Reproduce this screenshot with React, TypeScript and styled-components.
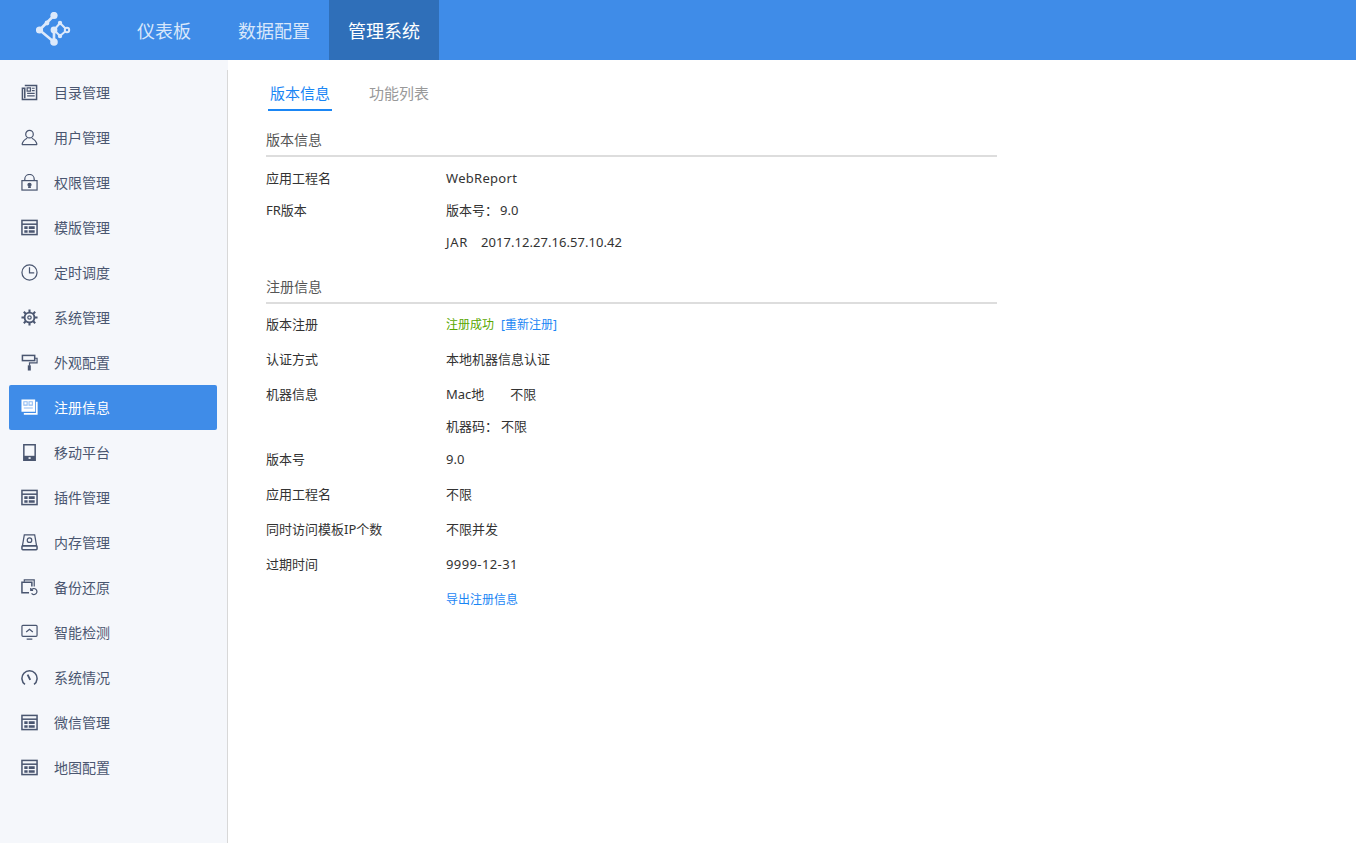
import React from "react";
import styled, { createGlobalStyle } from "styled-components";

const GlobalStyle = createGlobalStyle`
  html, body {
    margin: 0;
    padding: 0;
    height: 100%;
    background: #fff;
  }
  #root {
    height: 100%;
  }
  * {
    box-sizing: border-box;
  }
`;

const FONT = `"Noto Sans", "Noto Sans CJK SC", sans-serif`;

const IconSvg = styled.svg`
  width: 17px;
  height: 17px;
  flex: none;
  fill: none;
  stroke: currentColor;
  stroke-width: 1.3;
`;

const CatalogIcon = () => (
  <IconSvg viewBox="0 0 18 18">
    <path d="M4 1.5h12.5v15H1.5V4.5H4V15" strokeWidth="1.6" />
    <path d="M6.5 4h3.5v3.5H6.5zM11.5 4.5h3M11.5 7h3M6.5 10h8M6.5 12.5h8" />
  </IconSvg>
);

const UserIcon = () => (
  <IconSvg viewBox="0 0 18 18">
    <circle cx="9" cy="5.5" r="4" />
    <path d="M1 16.5C2 12.5 5 10.5 6.5 9.8M17 16.5C16 12.5 13 10.5 11.5 9.8M1 16.5h16" />
  </IconSvg>
);

const LockIcon = () => (
  <IconSvg viewBox="0 0 18 18">
    <rect x="1" y="7" width="16" height="10" />
    <path d="M4 7V5.5a5 5 0 0 1 10 0V7" />
    <circle cx="9" cy="11.5" r="1.6" fill="currentColor" />
    <path d="M7.5 14h3" strokeWidth="1.6" />
  </IconSvg>
);

const TableIcon = () => (
  <IconSvg viewBox="0 0 18 18">
    <rect x="1" y="1.5" width="16" height="15" strokeWidth="1.6" />
    <path d="M1 5.5h16" strokeWidth="1.6" />
    <path d="M3.5 7.8h3.5v2.7H3.5zM3.5 11.8h3.5v2.7H3.5zM8.2 7.8h6.3v2.7H8.2zM8.2 11.8h6.3v2.7H8.2z" fill="currentColor" stroke="none" />
  </IconSvg>
);

const ClockIcon = () => (
  <IconSvg viewBox="0 0 18 18">
    <circle cx="9" cy="9" r="8" />
    <path d="M9 3.5v6h5" />
  </IconSvg>
);

const GearIcon = () => (
  <IconSvg viewBox="0 0 18 18">
    <circle cx="9" cy="9" r="1.8" />
    <circle cx="9" cy="9" r="5.2" strokeWidth="2" />
    <path d="M9 0.5v3M9 14.5v3M0.5 9h3M14.5 9h3M3 3l2.2 2.2M12.8 12.8L15 15M15 3l-2.2 2.2M5.2 12.8L3 15" strokeWidth="2.2" />
  </IconSvg>
);

const RollerIcon = () => (
  <IconSvg viewBox="0 0 18 18">
    <rect x="1.5" y="1.5" width="13" height="5.5" strokeWidth="1.6" />
    <path d="M14.5 4.5h2.5v5H9v3" />
    <rect x="7.2" y="12" width="3.2" height="5.5" fill="currentColor" stroke="none" />
  </IconSvg>
);

const NoteIcon = () => (
  <IconSvg viewBox="0 0 18 18">
    <rect x="0.5" y="0.5" width="14.5" height="13" fill="currentColor" stroke="none" />
    <path d="M3 3h3.5v3.5H3zM8.5 3h3.5v3.5H8.5zM3 9.5h9.5" stroke="#8fbcf3" strokeWidth="1.1" />
    <path d="M16.7 3v12.7H3" strokeWidth="1.8" />
  </IconSvg>
);

const TabletIcon = () => (
  <IconSvg viewBox="0 0 18 18">
    <rect x="3" y="0.8" width="12" height="16.4" strokeWidth="1.6" />
    <path d="M3 12.5h12v4.7H3z" fill="currentColor" stroke="none" />
    <rect x="8" y="14" width="2.2" height="1.8" fill="#f5f7fb" stroke="none" />
  </IconSvg>
);

const DiskIcon = () => (
  <IconSvg viewBox="0 0 18 18">
    <path d="M3.5 1h11l2 11.5h-15z" />
    <rect x="1" y="12.5" width="16" height="4.2" rx="1" strokeWidth="1.6" />
    <circle cx="9" cy="6.5" r="2.4" />
  </IconSvg>
);

const BackupIcon = () => (
  <IconSvg viewBox="0 0 18 18">
    <path d="M3.5 3V1h10.5v7" />
    <path d="M8.5 14.5H1V3.5h10.5v4.5" strokeWidth="1.6" />
    <path d="M11 11.5a3.2 3.2 0 1 1 .2 3.8M10.3 9.5V12h2.5" />
  </IconSvg>
);

const MonitorIcon = () => (
  <IconSvg viewBox="0 0 18 18">
    <rect x="1" y="1.5" width="16" height="11.5" rx="1" />
    <path d="M5.5 8.5L9 5.5l3.5 3M6 16h6" />
  </IconSvg>
);

const GaugeIcon = () => (
  <IconSvg viewBox="0 0 18 18">
    <path d="M4.2 16.3a8 8 0 1 1 9.6 0" strokeWidth="1.6" />
    <path d="M7 6l2.8 5.5" strokeWidth="2" />
  </IconSvg>
);

const LogoMark = () => (
  <svg width="36" height="36" viewBox="0 0 36 36" fill="none" stroke="#dce9fb" strokeWidth="2.6">
    <path d="M18 3.5L3.5 18 18 30V18" />
    <path d="M18 18l6 6 7-6-7-7-6 7" strokeWidth="2" />
    <g fill="#dce9fb" stroke="none">
      <circle cx="18" cy="3.5" r="3.6" />
      <circle cx="3.5" cy="18" r="3.6" />
      <circle cx="18" cy="30" r="3.8" />
      <circle cx="18" cy="18" r="3.4" />
      <circle cx="11" cy="11" r="2.4" />
      <circle cx="24" cy="11" r="2.2" />
      <circle cx="24" cy="24" r="2.2" />
    </g>
    <circle cx="31" cy="18" r="2.2" fill="#3f8ce8" strokeWidth="2" />
  </svg>
);

const menu = [
  { label: "目录管理", icon: <CatalogIcon /> },
  { label: "用户管理", icon: <UserIcon /> },
  { label: "权限管理", icon: <LockIcon /> },
  { label: "模版管理", icon: <TableIcon /> },
  { label: "定时调度", icon: <ClockIcon /> },
  { label: "系统管理", icon: <GearIcon /> },
  { label: "外观配置", icon: <RollerIcon /> },
  { label: "注册信息", icon: <NoteIcon />, active: true },
  { label: "移动平台", icon: <TabletIcon /> },
  { label: "插件管理", icon: <TableIcon /> },
  { label: "内存管理", icon: <DiskIcon /> },
  { label: "备份还原", icon: <BackupIcon /> },
  { label: "智能检测", icon: <MonitorIcon /> },
  { label: "系统情况", icon: <GaugeIcon /> },
  { label: "微信管理", icon: <TableIcon /> },
  { label: "地图配置", icon: <TableIcon /> },
];

const App = () => {
  return (
    <Page>
      <GlobalStyle />
      <TopBar>
        <LogoBox>
          <LogoMark />
        </LogoBox>
        <TopNav>
          <TopItem>仪表板</TopItem>
          <TopItem>数据配置</TopItem>
          <TopItem $active>管理系统</TopItem>
        </TopNav>
      </TopBar>
      <Body>
        <Sidebar>
          <Menu>
            {menu.map((item) => (
              <MenuItem key={item.label} $active={item.active}>
                {item.icon}
                <span>{item.label}</span>
              </MenuItem>
            ))}
          </Menu>
        </Sidebar>
        <Content>
          <Tabs>
            <Tab $active>版本信息</Tab>
            <Tab>功能列表</Tab>
          </Tabs>
          <Section>
            <SectionTitle>版本信息</SectionTitle>
            <Row $gap={0}>
              <Label>应用工程名</Label>
              <Values>
                <Line>
                  <Latin $track={0.3}>WebReport</Latin>
                </Line>
              </Values>
            </Row>
            <Row $gap={0}>
              <Label>FR版本</Label>
              <Values>
                <Line>
                  版本号：<Spacer $width={2} />9.0
                </Line>
                <Line>
                  <Latin $track={0.7}>JAR</Latin>
                  <Spacer $width={13} />
                  <Latin $track={0.05}>2017.12.27.16.57.10.42</Latin>
                </Line>
              </Values>
            </Row>
          </Section>
          <Section>
            <SectionTitle $after={4}>注册信息</SectionTitle>
            <Row>
              <Label>版本注册</Label>
              <Values>
                <Line $small>
                  <Success>注册成功</Success>
                  <Spacer $width={7} />
                  <Link>[重新注册]</Link>
                </Line>
              </Values>
            </Row>
            <Row>
              <Label>认证方式</Label>
              <Values>
                <Line>本地机器信息认证</Line>
              </Values>
            </Row>
            <Row $gap={1}>
              <Label>机器信息</Label>
              <Values>
                <Line>
                  Mac地<Spacer $width={26} />不限
                </Line>
                <Line>
                  机器码：<Spacer $width={3} />不限
                </Line>
              </Values>
            </Row>
            <Row>
              <Label>版本号</Label>
              <Values>
                <Line>9.0</Line>
              </Values>
            </Row>
            <Row>
              <Label>应用工程名</Label>
              <Values>
                <Line>不限</Line>
              </Values>
            </Row>
            <Row>
              <Label>同时访问模板IP个数</Label>
              <Values>
                <Line>不限并发</Line>
              </Values>
            </Row>
            <Row>
              <Label>过期时间</Label>
              <Values>
                <Line>
                  <Latin $track={0.4}>9999-12-31</Latin>
                </Line>
              </Values>
            </Row>
            <Row $gap={0}>
              <Label />
              <Values>
                <Line $small>
                  <Link>导出注册信息</Link>
                </Line>
              </Values>
            </Row>
          </Section>
        </Content>
      </Body>
    </Page>
  );
};

const Page = styled.div`
  display: flex;
  flex-direction: column;
  height: 100vh;
  overflow: hidden;
  font-family: ${FONT};
`;

const TopBar = styled.header`
  display: flex;
  flex: none;
  height: 60px;
  background-color: #3f8ce8;
`;

const LogoBox = styled.div`
  display: flex;
  align-items: center;
  width: 118px;
  padding-left: 36px;
`;

const TopNav = styled.nav`
  display: flex;
`;

const TopItem = styled.div<{ $active?: boolean }>`
  display: flex;
  align-items: center;
  padding: 0 19px;
  font-size: 18px;
  color: ${(p) => (p.$active ? "#fff" : "#d8e7fb")};
  background-color: ${(p) => (p.$active ? "#2f6fb9" : "transparent")};

  &:first-child {
    margin-right: 9px;
  }
`;

const Body = styled.div`
  display: flex;
  flex: 1;
  min-height: 0;
`;

const Sidebar = styled.aside`
  display: flex;
  flex: none;
  width: 228px;
  padding-top: 10px;
  background-color: #f5f7fb;
`;

const Menu = styled.div`
  flex: 1;
  padding: 0 10px 0 9px;
  border-right: 1px solid #d8d8d8;
`;

const MenuItem = styled.div<{ $active?: boolean }>`
  display: flex;
  align-items: center;
  gap: 16px;
  height: 45px;
  padding-left: 12px;
  border-radius: 2px;
  font-size: 14px;
  color: ${(p) => (p.$active ? "#fff" : "#4a5670")};
  background-color: ${(p) => (p.$active ? "#3f8ce8" : "transparent")};

  span {
    margin-bottom: 2px;
  }
`;

const Content = styled.main`
  flex: 1;
  padding: 19px 0 0 38px;
`;

const Tabs = styled.div`
  display: flex;
  gap: 35px;
  padding-left: 2px;
`;

const Tab = styled.div<{ $active?: boolean }>`
  height: 32px;
  padding: 0 2px;
  line-height: 28px;
  font-size: 15px;
  color: ${(p) => (p.$active ? "#1a86f5" : "#999")};
  border-bottom: 2px solid ${(p) => (p.$active ? "#1a86f5" : "transparent")};
`;

const Section = styled.section`
  width: 731px;
  margin-top: 15px;
`;

const SectionTitle = styled.h2<{ $after?: number }>`
  height: 31px;
  margin: 0 0 ${(p) => p.$after ?? 5}px;
  line-height: 28px;
  font-size: 14px;
  font-weight: 400;
  color: #555;
  border-bottom: 2px solid #ddd;
`;

const Row = styled.div<{ $gap?: number }>`
  display: flex;
  margin-bottom: ${(p) => p.$gap ?? 3}px;
`;

const Label = styled.div`
  flex: none;
  width: 180px;
  line-height: 32px;
  font-size: 13px;
  color: #333;
`;

const Values = styled.div`
  display: flex;
  flex-direction: column;
`;

const Line = styled.div<{ $small?: boolean }>`
  height: 32px;
  line-height: ${(p) => (p.$small ? 34 : 32)}px;
  font-size: ${(p) => (p.$small ? 12 : 13)}px;
  color: #333;
`;

const Latin = styled.span<{ $track: number }>`
  letter-spacing: ${(p) => p.$track}px;
`;

const Spacer = styled.span<{ $width: number }>`
  display: inline-block;
  width: ${(p) => p.$width}px;
`;

const Success = styled.span`
  color: #5aa700;
`;

const Link = styled.span`
  color: #1a86f5;
`;

export default App;
